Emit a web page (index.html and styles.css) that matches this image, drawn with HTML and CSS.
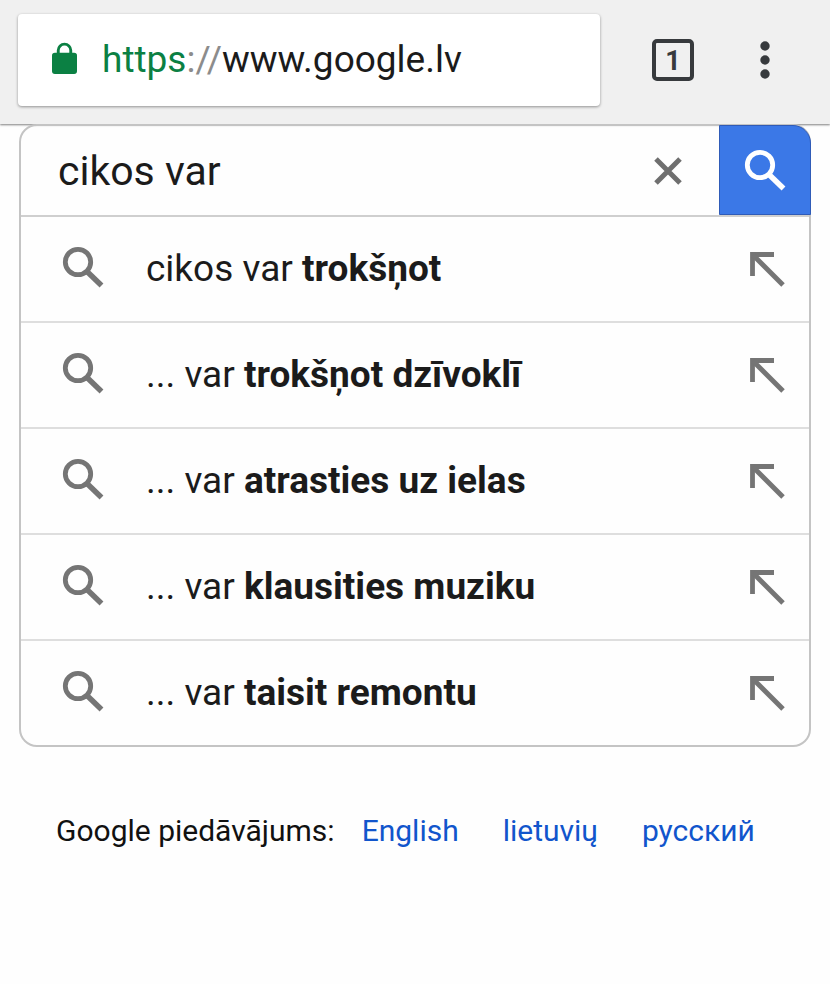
FILE: index.html
```html
<!DOCTYPE html>
<html lang="lv">
<head>
  <meta charset="UTF-8">
  <meta name="viewport" content="width=device-width, initial-scale=1.0">
  <title>Google</title>
  <link rel="stylesheet" href="styles.css">
</head>
<body>
  <svg class="sprite" aria-hidden="true">
    <symbol id="icon-search" viewBox="0 0 42 42">
      <circle cx="16" cy="16" r="12.700" fill="none" stroke="currentColor" stroke-width="4.800"/>
      <path d="M25 25.500L39.500 39.500" fill="none" stroke="currentColor" stroke-width="5.500"/>
    </symbol>
    <symbol id="icon-arrow" viewBox="0 0 36 36">
      <path d="M25 3.500H3.500V25" fill="none" stroke="currentColor" stroke-width="4.800"/>
      <path d="M4 4L34 34" fill="none" stroke="currentColor" stroke-width="5"/>
    </symbol>
  </svg>

  <header class="toolbar">
    <div class="address-bar">
      <svg class="lock" viewBox="0 0 26 34" aria-hidden="true">
        <path d="M6.500 13V8.500a6.500 6.500 0 0 1 13 0V13" fill="none" stroke="currentColor" stroke-width="3"/>
        <rect x="0" y="11" width="26" height="22" rx="3" fill="currentColor"/>
      </svg>
      <div class="url" role="textbox" aria-label="URL" contenteditable="true" spellcheck="false"><span class="scheme">https</span><span class="slashes">://</span>www.google.lv</div>
    </div>
    <button class="tabs" type="button" aria-label="Tabs">1</button>
    <button class="menu" type="button" aria-label="Menu">
      <svg viewBox="0 0 10 38" aria-hidden="true">
        <circle cx="5" cy="5" r="4.700"/>
        <circle cx="5" cy="19" r="4.700"/>
        <circle cx="5" cy="33" r="4.700"/>
      </svg>
    </button>
  </header>

  <main>
    <form class="search-box">
      <div class="search-row">
        <input class="query" type="text" value="cikos var" aria-label="Meklēt" autocomplete="off">
        <button class="clear" type="reset" aria-label="Notīrīt">
          <svg viewBox="0 0 28 28" aria-hidden="true">
            <path d="M2 2L26 26M26 2L2 26" fill="none" stroke="currentColor" stroke-width="5"/>
          </svg>
        </button>
        <button class="submit" type="submit" aria-label="Meklēt">
          <svg class="icon-search"><use href="#icon-search"/></svg>
        </button>
      </div>
      <ul class="suggestions">
        <li class="suggestion">
          <svg class="icon-search"><use href="#icon-search"/></svg>
          <a href="#">cikos var <b>trokšņot</b></a>
          <button class="fill" type="button" aria-label="cikos var trokšņot"><svg><use href="#icon-arrow"/></svg></button>
        </li>
        <li class="suggestion">
          <svg class="icon-search"><use href="#icon-search"/></svg>
          <a href="#">... var <b>trokšņot dzīvoklī</b></a>
          <button class="fill" type="button" aria-label="var trokšņot dzīvoklī"><svg><use href="#icon-arrow"/></svg></button>
        </li>
        <li class="suggestion">
          <svg class="icon-search"><use href="#icon-search"/></svg>
          <a href="#">... var <b>atrasties uz ielas</b></a>
          <button class="fill" type="button" aria-label="var atrasties uz ielas"><svg><use href="#icon-arrow"/></svg></button>
        </li>
        <li class="suggestion">
          <svg class="icon-search"><use href="#icon-search"/></svg>
          <a href="#">... var <b>klausities muziku</b></a>
          <button class="fill" type="button" aria-label="var klausities muziku"><svg><use href="#icon-arrow"/></svg></button>
        </li>
        <li class="suggestion">
          <svg class="icon-search"><use href="#icon-search"/></svg>
          <a href="#">... var <b>taisit remontu</b></a>
          <button class="fill" type="button" aria-label="var taisit remontu"><svg><use href="#icon-arrow"/></svg></button>
        </li>
      </ul>
    </form>

    <nav class="languages">
      <span class="languages-label">Google piedāvājums:</span>
      <a href="#" lang="en">English</a>
      <a href="#" lang="lt">lietuvių</a>
      <a href="#" lang="ru">русский</a>
    </nav>
  </main>
</body>
</html>
```

FILE: styles.css
```css
* {
  box-sizing: border-box;
}
body {
  margin: 0;
  font-family: Roboto, sans-serif;
  background-color: #fefefe;
  color: #1b1b1b;
}
button {
  padding: 0;
  border: none;
  background: none;
  font-family: inherit;
  cursor: pointer;
}
svg {
  display: block;
}
.sprite {
  display: none;
}

/* browser toolbar */
.toolbar {
  display: flex;
  align-items: center;
  height: 124px;
  padding: 0 58px 4px 18px;
  background-color: #f0f0f0;
  box-shadow: 0 1px 2px rgba(0, 0, 0, 0.5);
}
.address-bar {
  display: flex;
  flex: 1;
  align-items: center;
  gap: 25px;
  height: 92px;
  padding-left: 34px;
  background-color: #fff;
  border-radius: 4px;
  box-shadow: 0 1px 3px rgba(0, 0, 0, 0.4);
}
.lock {
  width: 25px;
  height: 33px;
  margin-bottom: 4px;
  color: #0b8043;
}
.url {
  font-size: 37px;
  line-height: 48px;
  white-space: nowrap;
  outline: none;
}
.scheme {
  color: #0b8043;
}
.slashes {
  color: #8c8c8c;
}
.tabs {
  width: 42px;
  height: 42px;
  margin-left: 52px;
  border: 4px solid #373a3d;
  border-radius: 5px;
  color: #373a3d;
  font-size: 27px;
  font-weight: bold;
  line-height: 36px;
}
.menu {
  width: 14px;
  margin-left: 64px;
}
.menu svg {
  width: 10px;
  height: 38px;
  margin: 0 auto;
  fill: #373a3d;
}

/* search box with suggestions */
.search-box {
  margin: 0 19px;
  border: 2px solid #c4c4c4;
  border-radius: 18px;
}
.search-row {
  display: flex;
  height: 89px;
}
.query {
  flex: 1;
  min-width: 0;
  padding: 0 0 0 37px;
  border: none;
  background: none;
  color: #1b1b1b;
  font-family: inherit;
  font-size: 41px;
  outline: none;
}
.clear {
  width: 102px;
  padding-left: 37px;
  color: #6f6f6f;
}
.clear svg {
  width: 28px;
  height: 28px;
}
.submit {
  display: flex;
  align-items: center;
  justify-content: center;
  width: 92px;
  margin: -1px -2px 0 0;
  border: 1px solid #2f5bb7;
  border-radius: 0 18px 0 0;
  background-color: #3b78e7;
  color: #fff;
}
.icon-search {
  flex: none;
  width: 42px;
  height: 42px;
}
.suggestions {
  margin: 0;
  padding: 0;
  list-style: none;
}
.suggestion {
  display: flex;
  align-items: center;
  height: 106px;
  padding: 0 24px 0 41px;
  border-top: 2px solid #dedede;
}
.suggestion:first-child {
  border-top-color: #cfcfcf;
}
.suggestion .icon-search {
  margin-bottom: 4px;
  color: #757575;
}
.suggestion a {
  flex: 1;
  margin-left: 42px;
  color: #1b1b1b;
  font-size: 37px;
  line-height: 48px;
  text-decoration: none;
}
.fill {
  color: #757575;
}
.fill svg {
  width: 36px;
  height: 36px;
}

/* language links */
.languages {
  display: flex;
  flex-wrap: wrap;
  gap: 44px;
  padding: 66px 56px;
  font-size: 30px;
  line-height: 36px;
}
.languages-label {
  margin-right: -17px;
  color: #111;
}
.languages a {
  color: #1155cc;
  text-decoration: none;
}
```
